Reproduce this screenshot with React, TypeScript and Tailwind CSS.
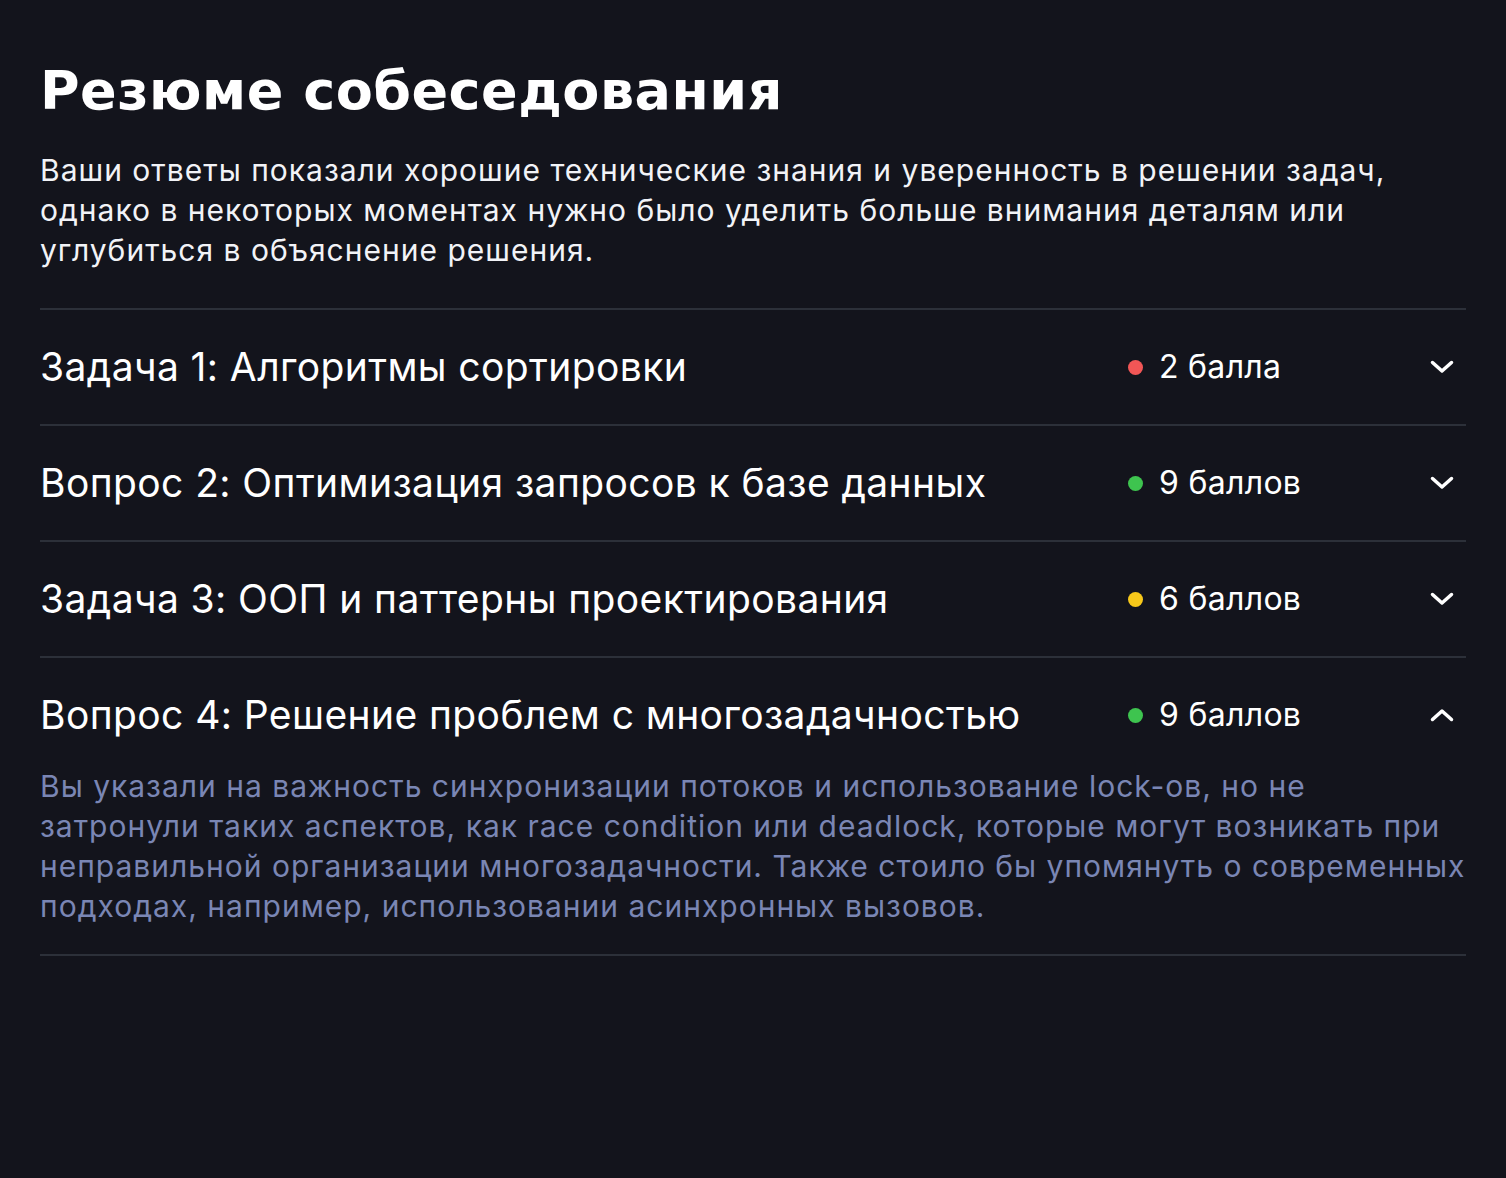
import React, { useState } from 'react';

interface Item {
    title: string;
    score: string;
    dot: string;
    details?: string;
}

const items: Item[] = [
    { title: 'Задача 1: Алгоритмы сортировки', score: '2 балла', dot: 'bg-[#f25656]' },
    { title: 'Вопрос 2: Оптимизация запросов к базе данных', score: '9 баллов', dot: 'bg-[#3ec44f]' },
    { title: 'Задача 3: ООП и паттерны проектирования', score: '6 баллов', dot: 'bg-[#f7c81a]' },
    {
        title: 'Вопрос 4: Решение проблем с многозадачностью',
        score: '9 баллов',
        dot: 'bg-[#3ec44f]',
        details:
            'Вы указали на важность синхронизации потоков и использование lock-ов, но не затронули таких аспектов, как race condition или deadlock, которые могут возникать при неправильной организации многозадачности. Также стоило бы упомянуть о современных подходах, например, использовании асинхронных вызовов.',
    },
];

const Chevron = ({ up }: { up: boolean }) => (
    <svg width="24" height="14" viewBox="0 0 24 14" fill="none" className={up ? 'rotate-180' : ''}>
        <path d="M2.5 2.5L12 11L21.5 2.5" stroke="white" strokeWidth={3.5} strokeLinecap="round" strokeLinejoin="round" />
    </svg>
);

const App: React.FC = () => {
    const [open, setOpen] = useState<number | null>(3);

    return (
        <div className="min-h-screen bg-[#13141c] text-white px-10 pt-[58px] font-['Inter',sans-serif]">
            <h1 className="text-[54px] leading-[66px] font-black tracking-[0.5px] font-['DejaVu_Sans',sans-serif]">
                Резюме собеседования
            </h1>
            <p className="mt-[26px] text-[30px] leading-[40px] tracking-[1px] text-[#f2f3f7]">
                Ваши ответы показали хорошие технические знания и уверенность в решении задач, однако в некоторых моментах нужно было уделить больше внимания деталям или углубиться в объяснение решения.
            </p>

            <div className="mt-[38px] border-t-2 border-[#2c3039]">
                {items.map((item, idx) => {
                    const isOpen = open === idx;
                    return (
                        <div key={idx} className="border-b-2 border-[#2c3039]">
                            <button
                                onClick={() => setOpen(isOpen ? null : idx)}
                                className="w-full flex items-center text-left h-[114px]"
                            >
                                <span className="flex-1 text-[39px] leading-[48px] tracking-[0.4px] text-white">{item.title}</span>
                                <span className="w-[292px] flex items-center gap-[16px]">
                                    <span className={`w-[15px] h-[15px] rounded-full ${item.dot}`} />
                                    <span className="text-[32px] leading-[40px] tracking-[0.3px]">{item.score}</span>
                                </span>
                                <span className="w-[46px] flex justify-center pr-[2px]">
                                    <Chevron up={isOpen} />
                                </span>
                            </button>
                            {isOpen && item.details && (
                                <p className="-mt-[6px] pb-[28px] text-[30px] leading-[40px] tracking-[1px] text-[#7a86b4]">
                                    {item.details}
                                </p>
                            )}
                        </div>
                    );
                })}
            </div>
        </div>
    );
};

export default App;
